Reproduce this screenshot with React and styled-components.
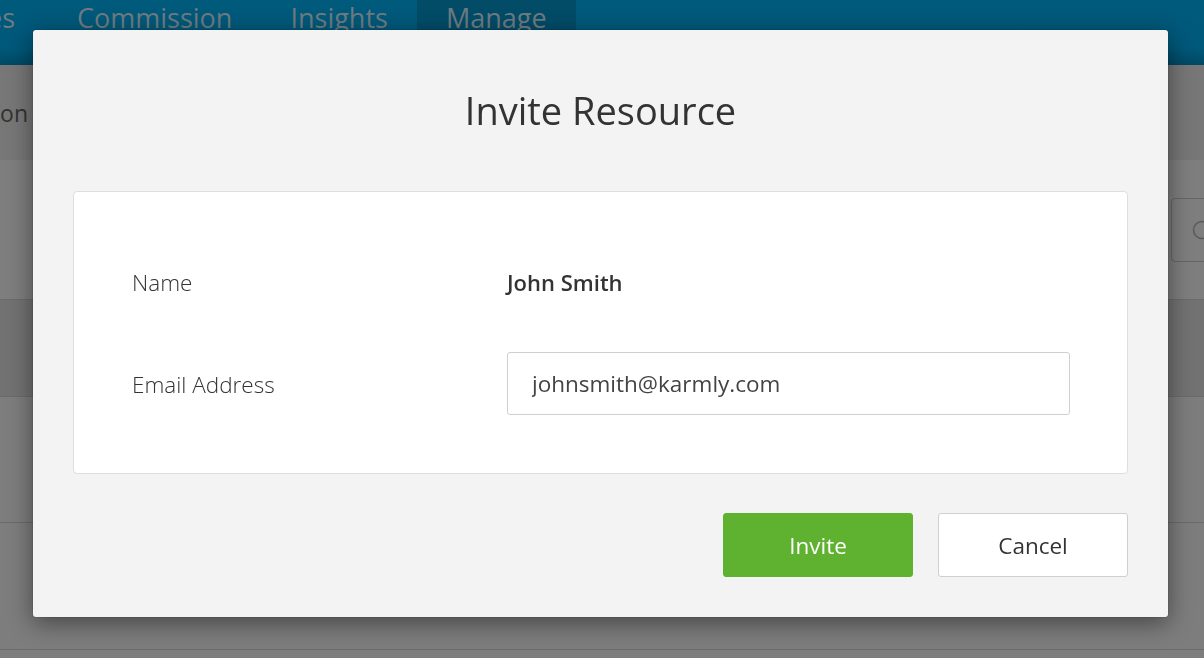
import React from "react";
import styled, { createGlobalStyle } from "styled-components";

const Global = createGlobalStyle`
  html, body { margin: 0; padding: 0; }
  body {
    font-family: "Open Sans", "Liberation Sans", sans-serif;
    width: 1204px;
    height: 658px;
    overflow: hidden;
    background: #7d7d7d;
  }
  * { box-sizing: border-box; }
`;

const Page = styled.div`
  width: 1204px;
  height: 658px;
  display: flex;
  flex-direction: column;
  background: #7d7d7d;
  overflow: hidden;
`;

const NavBar = styled.div`
  height: 65px;
  flex: none;
  display: flex;
  align-items: stretch;
  background: linear-gradient(#005a7b 0%, #00587a 75%, #014863 100%);
`;

const NavTab = styled.div`
  display: flex;
  align-items: flex-start;
  padding: 0 29px;
  font-size: 27px;
  line-height: 36px;
  color: #6e7b82;
  background: ${(p) => (p.$active ? "#024c68" : "transparent")};
  white-space: nowrap;
`;

const CutTab = styled(NavTab)`
  width: 15px;
  padding: 0 33px 0 0;
  box-sizing: content-box;
  justify-content: flex-end;
`;

const SubHeader = styled.div`
  height: 95px;
  flex: none;
  display: flex;
  align-items: center;
  background: #777777;
`;

const Crumb = styled.div`
  width: 28px;
  display: flex;
  justify-content: flex-end;
  white-space: nowrap;
  font-size: 23px;
  color: #333;
`;

const Toolbar = styled.div`
  height: 140px;
  flex: none;
  display: flex;
  align-items: center;
  justify-content: flex-end;
  background: #7e7e7e;
  border-bottom: 1px solid #6b6b6b;
`;

const SearchBox = styled.div`
  width: 60px;
  height: 64px;
  margin-right: -27px;
  border: 1px solid #666;
  border-radius: 4px;
  display: flex;
  align-items: center;
  padding-left: 20px;
`;

const TableHeader = styled.div`
  height: 97px;
  flex: none;
  background: #727272;
  border-bottom: 1px solid #6b6b6b;
`;

const TableRow = styled.div`
  height: ${(p) => p.$h}px;
  flex: none;
  background: #7d7d7d;
  border-bottom: 1px solid #6b6b6b;
`;

const Backdrop = styled.div`
  position: fixed;
  inset: 0;
  display: flex;
  align-items: flex-start;
  justify-content: flex-start;
  padding: 30px 0 0 33px;
`;

const Modal = styled.div`
  width: 1135px;
  height: 587px;
  background: #f3f3f3;
  border-radius: 3px;
  box-shadow: 0 6px 24px rgba(0, 0, 0, 0.45), 0 0 0 1px rgba(0, 0, 0, 0.08);
  display: flex;
  flex-direction: column;
  padding: 0 40px 40px;
`;

const TitleBar = styled.div`
  height: 161px;
  flex: none;
  display: flex;
  align-items: center;
  justify-content: center;
`;

const Title = styled.h1`
  margin: 0;
  font-size: 38px;
  font-weight: 400;
  color: #333;
  line-height: 1.2;
`;

const Card = styled.div`
  background: #fff;
  border: 1px solid #dedede;
  border-radius: 4px;
  padding: 58px 58px;
  display: grid;
  grid-template-columns: 375px 1fr;
  grid-auto-rows: 63px;
  row-gap: 39px;
  align-items: center;
`;

const Label = styled.div`
  font-size: 22.5px;
  font-weight: 300;
  color: #333;
  padding-top: 2px;
`;

const Value = styled.div`
  font-size: 22px;
  font-weight: 600;
  color: #333;
`;

const Input = styled.input`
  width: 563px;
  height: 63px;
  border: 1px solid #cfcfcf;
  border-radius: 3px;
  padding: 0 24px;
  font-family: inherit;
  font-size: 22.5px;
  color: #444;
  background: #fff;
  outline: none;
`;

const Actions = styled.div`
  margin-top: 39px;
  display: flex;
  justify-content: flex-end;
  gap: 25px;
`;

const Button = styled.button`
  width: 190px;
  height: 64px;
  border-radius: 3px;
  font-family: inherit;
  font-size: 22.5px;
  font-weight: 400;
  cursor: pointer;
  border: 1px solid ${(p) => (p.$primary ? "#5fb130" : "#cfcfcf")};
  background: ${(p) => (p.$primary ? "#5fb130" : "#fff")};
  color: ${(p) => (p.$primary ? "#fff" : "#333")};
`;

export default function App() {
  return (
    <>
      <Global />
      <Page>
        <NavBar>
          <CutTab>
            <span>Sales</span>
          </CutTab>
          <NavTab>Commission</NavTab>
          <NavTab>Insights</NavTab>
          <NavTab $active>Manage</NavTab>
        </NavBar>
        <SubHeader>
          <Crumb>Resource Information</Crumb>
        </SubHeader>
        <Toolbar>
          <SearchBox>
            <svg width="20" height="20" viewBox="0 0 20 20">
              <circle cx="10" cy="10" r="8.5" fill="none" stroke="#5a5a5a" strokeWidth="1.5" />
            </svg>
          </SearchBox>
        </Toolbar>
        <TableHeader />
        <TableRow $h={126} />
        <TableRow $h={127} />
        <TableRow $h={40} />
      </Page>
      <Backdrop>
        <Modal>
          <TitleBar>
            <Title>Invite Resource</Title>
          </TitleBar>
          <Card>
            <Label>Name</Label>
            <Value>John Smith</Value>
            <Label>Email Address</Label>
            <Input readOnly value="johnsmith@karmly.com" />
          </Card>
          <Actions>
            <Button $primary>Invite</Button>
            <Button>Cancel</Button>
          </Actions>
        </Modal>
      </Backdrop>
    </>
  );
}
